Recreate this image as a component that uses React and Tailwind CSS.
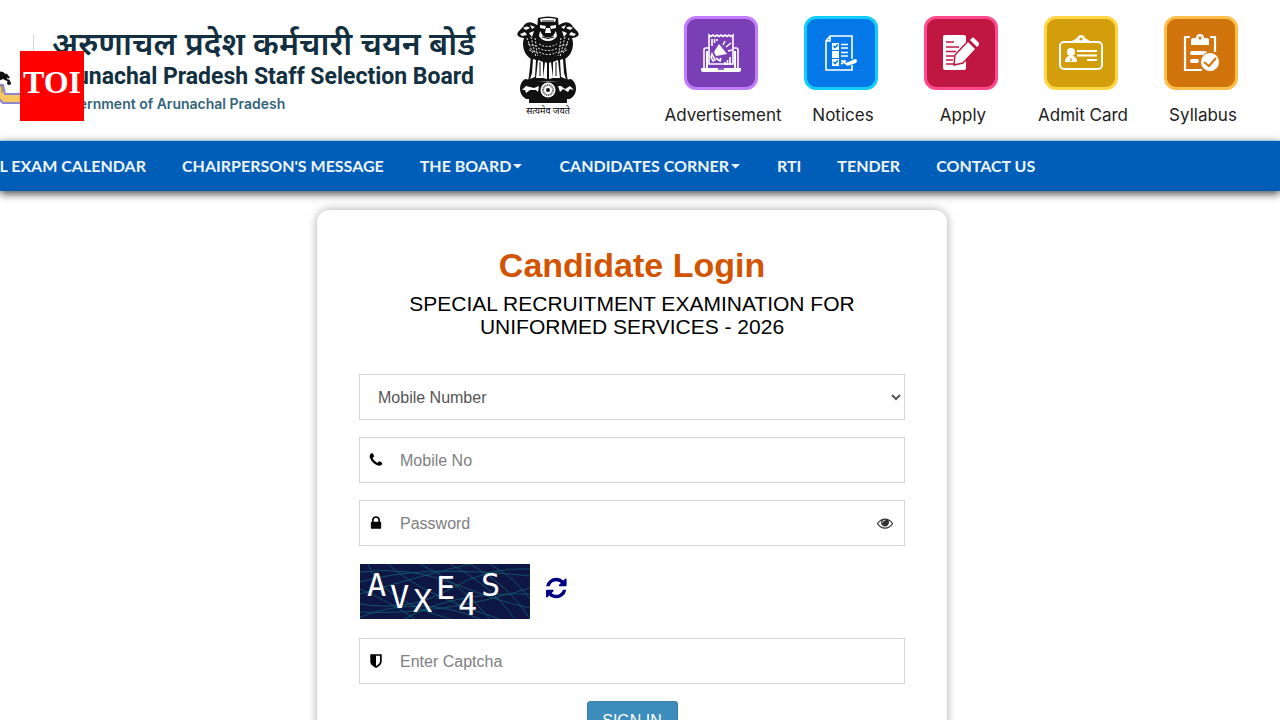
const quickLinks = [
  { label: "Advertisement", icon: AdIcon, tile: "bg-[#7b3fb5] border-[#c27dff]" },
  { label: "Notices", icon: NoticeIcon, tile: "bg-[#0478e8] border-[#12cdfb]" },
  { label: "Apply", icon: ApplyIcon, tile: "bg-[#bf1741] border-[#ff4b8c]" },
  { label: "Admit Card", icon: CardIcon, tile: "bg-[#d39e0c] border-[#ffd445]" },
  { label: "Syllabus", icon: SyllabusIcon, tile: "bg-[#d2740c] border-[#ffbd4a]" },
];

const navItems = [
  { label: "ANNUAL EXAM CALENDAR" },
  { label: "CHAIRPERSON'S MESSAGE" },
  { label: "THE BOARD", menu: true },
  { label: "CANDIDATES CORNER", menu: true },
  { label: "RTI" },
  { label: "TENDER" },
  { label: "CONTACT US" },
];

/* ICONS */
function AdIcon() {
  return (
    <svg viewBox="0 0 40 40" className="w-10 h-10" fill="none" stroke="white" strokeWidth="1.6">
      <path d="M8 31V2l2 1.5L12 2l2 1.5L16 2l2 1.5L20 2l2 1.5L24 2l2 1.5L28 2l2 1.5L32 2v29z" />
      <path d="M8 15H5q-2 0-2 2v18M32 15h3q2 0 2 2v18" />
      <path d="M6 18v17M34 18v17" strokeWidth="2" />
      <path d="M0 35h40v2q0 2-3 2H3q-3 0-3-2z" fill="white" stroke="none" />
      <path d="M17 36h6" stroke="#7b3fb5" />
      <path d="M11 6v7M13.500 6v4M16 6v2" />
      <path d="M18 11l8 10-11 2-2-4z" fill="white" stroke="none" />
      <path d="M11 21l3 6-2 1-2-4zM15 25l4 3 1-3M22 12l2-4M25 14l5-4M27 18l4-1M24 32v-3M26.500 32v-5M29 32v-8" />
    </svg>
  );
}

function NoticeIcon() {
  return (
    <svg viewBox="0 0 34 40" className="w-[34px] h-10" fill="none" stroke="white" strokeWidth="1.6">
      <path d="M28 26V3H6L2 8v29h26v-5M2 8h4V3" />
      <path d="M8 10h7v7H8zM8 18h7v7H8zM8 26h7v7H8z" fill="white" stroke="none" />
      <path d="M9.500 13l1.500 1.500 3-3M9.500 29l1.500 1.500 3-3" stroke="#0478e8" />
      <path d="M17 11.500h7M17 15h7M17 19.500h7M17 23h7M17 28h5" />
      <path d="M17 31l3-2 2 2 2-1" />
      <path d="M22 30l9-4q2 0 2 2l-1 2-9 3z" fill="white" stroke="none" />
    </svg>
  );
}

function ApplyIcon() {
  return (
    <svg viewBox="0 0 36 36" className="w-9 h-9">
      <path d="M2 0h19q2 0 2 2v31q0 2-2 2H2q-2 0-2-2V2q0-2 2-2z" fill="white" />
      <path d="M3 7h8M3 12h13M3 16.500h10M3 21h8M3 25h7M3 29h8" stroke="#bf1741" strokeWidth="1.600" />
      <path d="M11 30l1-10L25 6l8 8-13 14z" fill="white" stroke="#bf1741" strokeWidth="1.500" />
      <path d="M27 5l2-2q1-1 2 0l5 5q1 1 0 2l-2 2z" fill="white" />
    </svg>
  );
}

function CardIcon() {
  return (
    <svg viewBox="0 0 44 36" className="w-11 h-9" fill="none" stroke="white">
      <rect x="1" y="7" width="42" height="27" rx="4" strokeWidth="2" />
      <path d="M13 6l5-3q1-3 4-3t4 3l5 3z" fill="white" stroke="none" />
      <circle cx="22" cy="4" r="1.600" fill="#d39e0c" stroke="none" />
      <circle cx="12" cy="17" r="4" fill="white" stroke="none" />
      <path d="M6 27q0-5 4-6h4q4 1 4 6z" fill="white" stroke="none" />
      <path d="M12 22l-1 4h2z" fill="#d39e0c" stroke="none" />
      <path d="M18 16h20M18 20.500h20M28 25h10" strokeWidth="1.800" />
    </svg>
  );
}

function SyllabusIcon() {
  return (
    <svg viewBox="0 0 36 38" className="w-9 h-[38px]" fill="none" stroke="white">
      <path d="M7 3H2v33h17M27 3h5v15" strokeWidth="2.200" />
      <path d="M8 6q0-2 3-2h2q0-4 4-4t4 4h2q3 0 3 2v5H8z" fill="white" stroke="none" />
      <circle cx="17" cy="4" r="1.500" fill="#d2740c" stroke="none" />
      <path d="M9 19h13M9 27h5" strokeWidth="4" strokeLinecap="round" />
      <circle cx="27" cy="28" r="9.500" fill="white" stroke="#d2740c" strokeWidth="1" />
      <path d="M21 28l5 4 7-8" stroke="#d2740c" strokeWidth="2" />
    </svg>
  );
}

function Glyph({ d, className }) {
  return (
    <svg viewBox="0 0 1792 1792" className={className} fill="currentColor" aria-hidden="true">
      <path d={d} />
    </svg>
  );
}

const phone = "M1600 1240q0 27-10 70.5t-21 68.5q-21 50-122 106-94 51-186 51-27 0-53-3.5t-57.5-12.5-47-14.5-55.5-20.5-49-18q-98-35-175-83-127-79-264-216t-216-264q-48-77-83-175-3-9-18-49t-20.5-55.5-14.5-47-12.5-57.5-3.5-53q0-92 51-186 56-101 106-122 25-11 68.5-21t70.5-10q14 0 21 3 18 6 53 76 11 19 30 54t35 63.5 31 53.5q3 4 17.5 25t21.5 35.5 7 28.5q0 20-28.5 50t-62 55-62 53-28.5 46q0 9 5 22.5t8.5 20.5 14 24 11.5 19q76 137 174 235t235 174q2 1 19 11.5t24 14 20.5 8.5 22.5 5q18 0 46-28.5t53-62 55-62 50-28.5q14 0 28.5 7t35.5 21.5 25 17.5q25 15 53.5 31t63.5 35 54 30q70 35 76 53 3 7 3 21z";
const lock = "M640 768h512v-192q0-106-75-181t-181-75-181 75-75 181v192zm832 96v576q0 40-28 68t-68 28h-960q-40 0-68-28t-28-68v-576q0-40 28-68t68-28h32v-192q0-184 132-316t316-132 316 132 132 316v192h32q40 0 68 28t28 68z";
const shield = "M1344 960v-640h-448v1137q119-63 213-137 235-184 235-360zm192-768v768q0 86-33.5 170.5t-83 150-118 127.5-126.5 103-121 77.5-89.5 49.5-42.5 20q-12 6-26 6t-26-6q-16-7-42.5-20t-89.5-49.5-121-77.5-126.5-103-118-127.5-83-150-33.5-170.5v-768q0-26 19-45t45-19h1152q26 0 45 19t19 45z";
const eye = "M1664 960q-152-236-381-353 61 104 61 225 0 185-131.5 316.5t-316.5 131.5-316.5-131.5-131.5-316.5q0-121 61-225-229 117-381 353 133 205 333.5 326.5t434.5 121.5 434.5-121.5 333.5-326.5zm-720-384q0-20-14-34t-34-14q-125 0-214.5 89.5t-89.5 214.5q0 20 14 34t34 14 34-14 14-34q0-86 61-147t147-61q20 0 34-14t14-34zm848 384q0 34-20 69-140 230-376.5 368.5t-499.5 138.5-499.5-139-376.5-368q-20-35-20-69t20-69q140-229 376.5-368t499.5-139 499.5 139 376.5 368q20 35 20 69z";
const refresh = "M1511 1056q0 5-1 7-64 268-268 434.5t-478 166.5q-146 0-282.5-55t-243.5-157l-129 129q-19 19-45 19t-45-19-19-45v-448q0-26 19-45t45-19h448q26 0 45 19t19 45-19 45l-137 137q71 66 161 102t187 36q134 0 250-65t186-179q11-17 53-117 8-23 30-23h192q13 0 22.5 9.5t9.5 22.5zm25-800v448q0 26-19 45t-45 19h-448q-26 0-45-19t-19-45 19-45l138-138q-148-137-349-137-134 0-250 65t-186 179q-11 17-53 117-8 23-30 23h-199q-13 0-22.5-9.5t-9.5-22.5v-7q65-268 270-434.5t480-166.5q146 0 284 55.5t245 156.5l130-129q19-19 45-19t45 19 19 45z";

/* LION CAPITAL */
function Emblem() {
  return (
    <svg viewBox="0 0 62 88" className="w-[62px] h-[88px]" role="img" aria-label="State emblem">
      {/* side lions */}
      <path d="M20 9q-7-5-12-1-2 3-5 6-4 3-2 6 3 2 6 2-2 6 0 12 2 6 7 9h34q5-3 7-9 2-6 0-12 3 0 6-2 2-3-2-6-3-3-5-6-5-4-12 1z" fill="#111" />
      <path d="M6 12q4-3 7 0l-4 2zM3 18l5-2 2 3-5 1zM56 12q-4-3-7 0l4 2zM59 18l-5-2-2 3 5 1zM12 17l5-2-2 6zM50 17l-5-2 2 6zM13 9l5 2-3 2zM49 9l-5 2 3 2z" fill="white" />
      {/* centre head */}
      <path d="M21 2q10-3 20 0l1 11q2 6-2 11-9 6-18 0-4-5-2-11z" fill="#111" />
      <path d="M23 3q8-2 16 0l-1 3H24zM23 9l6 1-1 3-5-1zM39 9l-6 1 1 3 5-1zM29 12h4l1 5h-6zM23 15l3 5q5 3 10 0l3-5 1 5q-3 5-9 5t-9-5z" fill="white" />
      <path d="M25 5h12M25 21q6 3 12 0" stroke="#111" fill="none" />
      {/* manes */}
      <g stroke="white" strokeWidth="0.9" fill="none" strokeDasharray="2 1.500">
        <path d="M10 22l6 16M14 21l5 20M18 22l3 20M52 22l-6 16M48 21l-5 20M44 22l-3 20" />
        <path d="M22 28q9 5 18 0M21 32q10 5 20 0M22 36q9 5 18 0M23 40q8 4 16 0M11 28l8 2M12 34l8 2M51 28l-8 2M50 34l-8 2" />
      </g>
      {/* legs */}
      <path d="M14 40h34l2 20 1 5H11l1-5z" fill="#111" />
      <path d="M16 43l3 1-1 17-5 2 2-6zM21 44l5 2v16h-7zM28 46l2 1v16l-4-1zM46 43l-3 1 1 17 5 2-2-6zM41 44l-5 2v16h7zM34 46l-2 1v16l4-1z" fill="white" />
      <path d="M23 46v14M39 46v14" stroke="#111" strokeWidth="1" />
      {/* abacus with wheel */}
      <path d="M8 63q23 5 46 0 5 3 5 10 0 6-6 10H9q-6-4-6-10 0-7 5-10z" fill="#111" />
      <path d="M12 83h38v4H12z" fill="#111" />
      <path d="M9 70l8 2 5-2-1 6-2-2-6 0-4 3-1-3-3 0zM53 70l-5 3-4-3-3 0 2 6 3-3 5 3 2-3 4 1z" fill="white" />
      <circle cx="31" cy="74" r="7.500" fill="white" />
      <circle cx="31" cy="74" r="5" fill="none" stroke="#555" strokeWidth="2" strokeDasharray="1 0.7" />
      <circle cx="31" cy="74" r="2" fill="#111" />
    </svg>
  );
}

/* GRADUATE ON BOOKS */
function Graduate() {
  return (
    <svg viewBox="0 0 36 40" className="w-9 h-10" aria-hidden="true">
      <path d="M8 5l7 1 5 4-1 3 3 1-1 2-6-3-7 3z" fill="#111" />
      <path d="M18 8l3 4" stroke="#111" strokeWidth="2" />
      <circle cx="21" cy="17" r="2" fill="#111" />
      <path d="M0 18l15 1 2 9h19v9H15l-4-4H0z" fill="#f9c860" stroke="#8d87cf" strokeWidth="2" />
      <path d="M11 20h3v7" stroke="#777" fill="none" />
    </svg>
  );
}

const captchaLetters = [
  { char: "A", x: 7, y: 32 },
  { char: "V", x: 30, y: 44 },
  { char: "X", x: 53, y: 48 },
  { char: "E", x: 76, y: 35 },
  { char: "4", x: 98, y: 51 },
  { char: "S", x: 121, y: 32 },
];

function Captcha() {
  return (
    <svg viewBox="0 0 170 55" className="w-[170px] h-[55px]" role="img" aria-label="Captcha">
      <rect width="170" height="55" fill="#0e1744" />
      <g fill="none" stroke="#12606f" strokeWidth="0.8">
        <path d="M0 8Q50 2 95 20T170 44M0 18Q60 0 170 12M0 30Q60 12 110 0M0 40Q50 48 90 25T170 5" />
        <path d="M0 53Q60 30 120 55M8 0Q20 35 90 55M28 0Q60 30 140 55M60 0Q100 18 130 55M90 0Q130 20 155 55" />
        <path d="M110 0Q150 22 170 55M130 0Q155 14 170 35M0 48Q80 52 170 24M0 25Q30 38 55 55M45 55Q90 28 170 30" />
      </g>
      <g fill="white" className="font-['DejaVu_Sans_Mono',monospace] text-[32px]">
        {captchaLetters.map((l) => (
          <text key={l.char} x={l.x} y={l.y}>{l.char}</text>
        ))}
      </g>
    </svg>
  );
}

function Field({ id, type, placeholder, icon, children }) {
  return (
    <div className="flex items-center h-[46px] border border-[#d2d6de] bg-white">
      <label htmlFor={id} aria-label={placeholder} className="w-10 pl-2">
        <Glyph d={icon} className="w-4 h-4 text-black" />
      </label>
      <input
        id={id}
        type={type}
        placeholder={placeholder}
        className="flex-1 min-w-0 h-full pt-0.5 outline-none text-base text-[#555] placeholder:text-[#808080]"
      />
      {children}
    </div>
  );
}

export default function App() {
  return (
    <div className="relative h-screen overflow-hidden bg-white font-['Liberation_Sans',Arial,sans-serif]">

      {/* HEADER */}
      <header className="flex justify-between h-[140px] pr-[19px]">
        <div className="flex">
          <div className="w-[46px] h-20 mt-[34px] pt-8 -ml-3 border-r border-[#cfd6dc]">
            <Graduate />
          </div>
          <div className="mt-[30px] ml-[18px] text-[#12303f] whitespace-nowrap w-[428px]">
            <p className="text-[32px] leading-[35px] font-semibold font-['Noto_Sans_Devanagari','Noto_Sans',sans-serif]">
              अरुणाचल प्रदेश कर्मचारी चयन बोर्ड
            </p>
            <h1 className="text-[23px] leading-6 font-bold font-[Roboto,sans-serif]">
              Arunachal Pradesh Staff Selection Board
            </h1>
            <p className="text-sm leading-[29px] font-semibold text-[#34647a] font-[Inter,sans-serif]">
              Government of Arunachal Pradesh
            </p>
          </div>
          <div className="flex flex-col items-center w-[62px] ml-[37px] mt-4">
            <Emblem />
            <span className="text-[9px] leading-4 whitespace-nowrap font-['Noto_Sans_Devanagari','Noto_Sans',sans-serif]">सत्यमेव जयते</span>
          </div>
        </div>

        <div className="flex mt-4">
          {quickLinks.map((link) => (
            <a key={link.label} href="#" className="flex flex-col items-center w-[120px] text-[#222] whitespace-nowrap">
              <span className={`flex items-center justify-center w-[74px] h-[74px] rounded-xl border-[3px] ${link.tile}`}>
                <link.icon />
              </span>
              <span className="mt-3 pl-1 text-[17px] leading-[26px] font-[Inter,sans-serif]">{link.label}</span>
            </a>
          ))}
        </div>
      </header>

      {/* NAV */}
      <nav className="relative flex h-[51px] border-t border-[#a9cbe0] bg-[#005eb8] shadow-[0_3px_8px_rgba(0,0,0,0.7)]">
        <ul className="flex items-center gap-9 -ml-[59px] text-[#eef5fc] text-base font-bold whitespace-nowrap font-[Lato,sans-serif]">
          {navItems.map((item) => (
            <li key={item.label}>
              <a href="#" className="flex items-center">
                {item.label}
                {item.menu && (
                  <svg viewBox="0 0 12 6" className="w-3 h-1.5" fill="currentColor" aria-hidden="true">
                    <path d="M2 1h9L6.500 5.500z" />
                  </svg>
                )}
              </a>
            </li>
          ))}
        </ul>
      </nav>

      {/* LOGIN CARD */}
      <main className="px-4 pr-8">
        <form className="max-w-[630px] mx-auto mt-[19px] px-[42px] pt-8 pb-10 rounded-xl bg-white shadow-[0_0_10px_rgba(0,0,0,0.35)]">
          <h2 className="text-center text-[34px] leading-[46px] font-bold text-[#d35400]">Candidate Login</h2>
          <h3 className="mt-1 px-10 text-center text-[21px] leading-[23px] text-black">
            SPECIAL RECRUITMENT EXAMINATION FOR UNIFORMED SERVICES - 2026
          </h3>

          <div className="flex flex-col gap-[17px] mt-9">
            <select
              aria-label="Login type"
              className="w-full h-[46px] px-[14px] pr-0 border border-[#d2d6de] bg-white text-base text-[#555]"
            >
              <option>Mobile Number</option>
              <option>Email</option>
            </select>

            <Field id="mobile" type="text" placeholder="Mobile No" icon={phone} />

            <Field id="password" type="password" placeholder="Password" icon={lock}>
              <button type="button" aria-label="Show password" className="pr-[11px]">
                <Glyph d={eye} className="w-4 h-4 text-[#333]" />
              </button>
            </Field>

            <div className="flex items-start gap-4 h-[58px] pt-px pl-px">
              <Captcha />
              <button type="button" aria-label="Refresh captcha" className="mt-3">
                <Glyph d={refresh} className="w-6 h-6 text-[#000080]" />
              </button>
            </div>

            <Field id="captcha" type="text" placeholder="Enter Captcha" icon={shield} />

            <button
              type="submit"
              className="self-center w-[91px] h-10 rounded-[3px] border border-[#367fa9] bg-[#3c8dbc] text-base text-white"
            >
              SIGN IN
            </button>
          </div>
        </form>
      </main>

      {/* CHANNEL BADGE */}
      <div className="absolute left-5 top-[51px] flex items-center justify-center w-16 h-[70px] pb-2 bg-[#ff0000] text-white text-[32px] font-bold font-['Liberation_Serif',serif]">
        TOI
      </div>
    </div>
  );
}
